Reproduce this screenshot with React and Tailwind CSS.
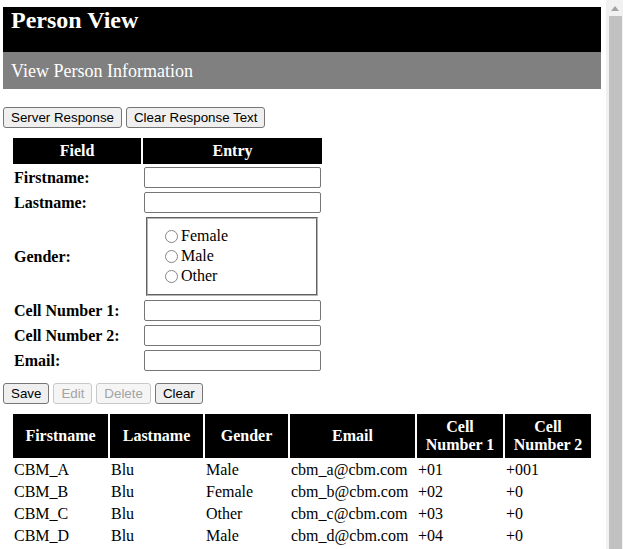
const fields = [
  { label: 'Firstname:' },
  { label: 'Lastname:' },
  { label: 'Gender:', gender: true },
  { label: 'Cell Number 1:' },
  { label: 'Cell Number 2:' },
  { label: 'Email:' },
];

const people = [
  ['CBM_A', 'Blu', 'Male', 'cbm_a@cbm.com', '+01', '+001'],
  ['CBM_B', 'Blu', 'Female', 'cbm_b@cbm.com', '+02', '+0'],
  ['CBM_C', 'Blu', 'Other', 'cbm_c@cbm.com', '+03', '+0'],
  ['CBM_D', 'Blu', 'Male', 'cbm_d@cbm.com', '+04', '+0'],
];

const columns = [
  { name: 'Firstname', w: 'w-[95px]' },
  { name: 'Lastname', w: 'w-[93px]' },
  { name: 'Gender', w: 'w-[83px]' },
  { name: 'Email', w: 'w-[125px]' },
  { name: 'Cell Number 1', w: 'w-[86px]' },
  { name: 'Cell Number 2', w: 'w-[86px]' },
];

function Btn({ children, disabled }) {
  return (
    <button
      disabled={disabled}
      className={
        'h-[21px] rounded-[3px] border px-[7px] text-[13.33px] leading-none font-["Liberation_Sans",Arial,sans-serif] ' +
        (disabled
          ? 'border-[#c9c9c9] bg-[#f5f5f5] text-[#a3a3a3]'
          : 'border-[#767676] bg-[#efefef] text-black')
      }
    >
      {children}
    </button>
  );
}

function Radio({ label }) {
  return (
    <label className="flex h-[20px] items-center">
      <span className="ml-[5px] mr-[3px] h-[13px] w-[13px] rounded-full border border-[#858585] bg-white" />
      <span>{label}</span>
    </label>
  );
}

export default function App() {
  return (
    <div className='flex h-[549px] w-[623px] overflow-hidden bg-white font-["Liberation_Serif","Times_New_Roman",serif] text-[16px] leading-[18px] text-black'>
      <div className="flex-1">
        <div className="ml-[3px] mr-[5px] mt-[7px]">
          <div className="h-[45px] bg-black pl-[8px]">
            <h1 className="text-[24px] font-bold leading-[27px] text-white">Person View</h1>
          </div>
          <div className="flex h-[37px] items-center bg-[#808080] pl-[8px] text-[18px] text-white">
            View Person Information
          </div>
        </div>

        <div className="ml-[3px] mt-[18px] flex gap-[4px]">
          <Btn>Server Response</Btn>
          <Btn>Clear Response Text</Btn>
        </div>

        <table className="ml-[11px] mt-[8px] border-separate border-spacing-[2px]">
          <thead>
            <tr>
              <th className="h-[26px] w-[128px] bg-black p-[1px] font-bold text-white">Field</th>
              <th className="h-[26px] w-[179px] bg-black p-[1px] font-bold text-white">Entry</th>
            </tr>
          </thead>
          <tbody>
            {fields.map((f) => (
              <tr key={f.label}>
                <td className="p-[1px] font-bold">{f.label}</td>
                <td className="p-[1px]">
                  {f.gender ? (
                    <fieldset className="mx-[2px] h-[79px] w-[172px] border-2 border-[#b5b5b5] [border-style:groove] pl-[12px] pt-[7px]">
                      <Radio label="Female" />
                      <Radio label="Male" />
                      <Radio label="Other" />
                    </fieldset>
                  ) : (
                    <input
                      type="text"
                      className="block h-[21px] w-[177px] rounded-[2px] border border-[#767676] bg-white px-[2px]"
                    />
                  )}
                </td>
              </tr>
            ))}
          </tbody>
        </table>

        <div className="ml-[3px] mt-[9px] flex gap-[4px]">
          <Btn>Save</Btn>
          <Btn disabled>Edit</Btn>
          <Btn disabled>Delete</Btn>
          <Btn>Clear</Btn>
        </div>

        <table className="ml-[11px] mt-[8px] border-separate border-spacing-[2px]">
          <thead>
            <tr>
              {columns.map((c) => (
                <th key={c.name} className={'h-[44px] bg-black p-[1px] font-bold leading-[18px] text-white ' + c.w}>
                  {c.name}
                </th>
              ))}
            </tr>
          </thead>
          <tbody>
            {people.map((p) => (
              <tr key={p[0]}>
                {p.map((v, i) => (
                  <td key={i} className="h-[20px] p-[1px] leading-[18px]">
                    {v}
                  </td>
                ))}
              </tr>
            ))}
          </tbody>
        </table>
      </div>

      <div className="flex w-[17px] flex-col bg-[#f1f1f1]">
        <div className="flex h-[16px] items-center justify-center">
          <svg width="8" height="5" viewBox="0 0 8 5">
            <path d="M0 5 L4 0 L8 5 Z" fill="#a3a3a3" />
          </svg>
        </div>
        <div className="ml-[3px] mr-[1px] flex-1 bg-[#c1c1c1]" />
      </div>
    </div>
  );
}
